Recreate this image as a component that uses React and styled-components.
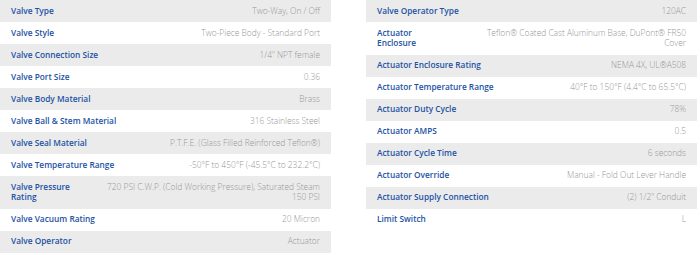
import React from 'react';
import styled, { createGlobalStyle } from 'styled-components';

const leftSpecs = [
  ['Valve Type', 'Two-Way, On / Off'],
  ['Valve Style', 'Two-Piece Body - Standard Port'],
  ['Valve Connection Size', '1/4" NPT female'],
  ['Valve Port Size', '0.36'],
  ['Valve Body Material', 'Brass'],
  ['Valve Ball & Stem Material', '316 Stainless Steel'],
  ['Valve Seal Material', 'P.T.F.E. (Glass Filled Reinforced Teflon®)'],
  ['Valve Temperature Range', '-50°F to 450°F (-45.5°C to 232.2°C)'],
  ['Valve Pressure Rating', '720 PSI C.W.P. (Cold Working Pressure), Saturated Steam 150 PSI'],
  ['Valve Vacuum Rating', '20 Micron'],
  ['Valve Operator', 'Actuator'],
];

const rightSpecs = [
  ['Valve Operator Type', '120AC'],
  ['Actuator Enclosure', 'Teflon® Coated Cast Aluminum Base, DuPont® FR50 Cover'],
  ['Actuator Enclosure Rating', 'NEMA 4X, UL®A508'],
  ['Actuator Temperature Range', '40°F to 150°F (4.4°C to 65.5°C)'],
  ['Actuator Duty Cycle', '78%'],
  ['Actuator AMPS', '0.5'],
  ['Actuator Cycle Time', '6 seconds'],
  ['Actuator Override', 'Manual - Fold Out Lever Handle'],
  ['Actuator Supply Connection', '(2) 1/2" Conduit'],
  ['Limit Switch', 'L'],
];

function SpecTable({ specs }) {
  return (
    <Table>
      {specs.map(([label, value], i) => (
        <Row key={label} $shaded={i % 2 === 0}>
          <Label>{label}</Label>
          <Value>{value}</Value>
        </Row>
      ))}
    </Table>
  );
}

export default function App() {
  return (
    <>
      <GlobalStyle />
      <Page>
        <SpecTable specs={leftSpecs} />
        <SpecTable specs={rightSpecs} />
      </Page>
    </>
  );
}

const GlobalStyle = createGlobalStyle`
  body {
    margin: 0;
    background: #fff;
    font-family: "Open Sans", "Liberation Sans", sans-serif;
  }`;

const Page = styled.div`
  display: grid;
  grid-template-columns: 331px 331px;
  column-gap: 35px;
  align-items: start;`;

const Table = styled.div`
  display: flex;
  flex-direction: column;`;

const Row = styled.div`
  display: flex;
  justify-content: space-between;
  align-items: flex-start;
  gap: 24px;
  padding: 5.75px 11px;
  line-height: 10.5px;
  background: ${({ $shaded }) => ($shaded ? '#ebebeb' : '#fff')};`;

// labels give up width faster than values when a row is too long
const Label = styled.span`
  flex: 0 2 auto;
  font-size: 8.3px;
  font-weight: 600;
  color: #2352a4;`;

const Value = styled.span`
  flex: 0 1 auto;
  font-size: 8.4px;
  font-weight: 300;
  color: #979797;
  text-align: right;`;
